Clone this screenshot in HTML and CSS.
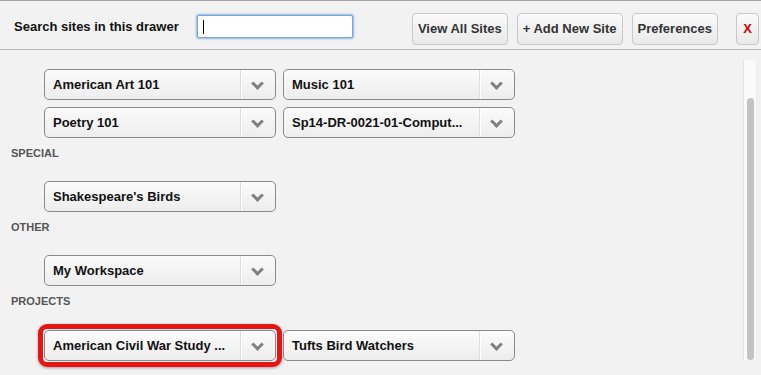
FILE: index.html
```html
<!DOCTYPE html>
<html lang="en">
<head>
    <meta charset="UTF-8">
    <meta name="viewport" content="width=device-width, initial-scale=1.0">
    <title>Sites Drawer</title>
    <link rel="stylesheet" href="styles.css">
</head>
<body>
    <header class="drawer-header">
        <label class="search-label" for="search">Search sites in this drawer</label>
        <input class="search-input" id="search" type="text">
        <div class="actions">
            <button class="btn">View All Sites</button>
            <button class="btn">+ Add New Site</button>
            <button class="btn">Preferences</button>
            <button class="btn btn-close">X</button>
        </div>
    </header>
    <div class="drawer">
        <div class="sites">
            <ul class="site-grid">
                <li class="site"><span class="site-name">American Art 101</span><span class="site-toggle"></span></li>
                <li class="site"><span class="site-name">Music 101</span><span class="site-toggle"></span></li>
                <li class="site"><span class="site-name">Poetry 101</span><span class="site-toggle"></span></li>
                <li class="site"><span class="site-name">Sp14-DR-0021-01-Comput...</span><span class="site-toggle"></span></li>
            </ul>
            <h4 class="group-title">Special</h4>
            <ul class="site-grid">
                <li class="site"><span class="site-name">Shakespeare's Birds</span><span class="site-toggle"></span></li>
            </ul>
            <h4 class="group-title">Other</h4>
            <ul class="site-grid">
                <li class="site"><span class="site-name">My Workspace</span><span class="site-toggle"></span></li>
            </ul>
            <h4 class="group-title">Projects</h4>
            <ul class="site-grid">
                <li class="site highlighted"><span class="site-name">American Civil War Study ...</span><span class="site-toggle"></span></li>
                <li class="site"><span class="site-name">Tufts Bird Watchers</span><span class="site-toggle"></span></li>
            </ul>
        </div>
        <div class="scrollbar"><div class="scroll-thumb"></div></div>
    </div>
</body>
</html>
```

FILE: styles.css
```css
html, body {
    height: 100%;
}
body {
    font-family: "Liberation Sans", Arial, sans-serif;
    background-color: #f2f2f2;
    color: #111;
    margin: 0;
    padding: 0;
    overflow: hidden;
}
.drawer-header {
    display: flex;
    align-items: center;
    height: 48px;
    border-top: 1px solid #a3a3a3;
    border-bottom: 1px solid #b8b8b8;
    padding-left: 14px;
}
.search-label {
    font-size: 13px;
    font-weight: bold;
    margin-top: 2px;
}
.search-input {
    box-sizing: border-box;
    width: 156px;
    height: 23px;
    margin: 3px 0 0 18px;
    border: 1px solid #7da6d6;
    border-radius: 2px;
    box-shadow: 0 0 2px 1px #8db6e6;
    outline: none;
    background: linear-gradient(#000, #000) no-repeat 5px 4px / 1px 14px, #fff;
}
.actions {
    display: flex;
    align-items: center;
    margin-left: auto;
    margin-right: 2px;
    margin-top: 7px;
}
.btn {
    height: 32px;
    padding: 0 5px;
    margin-left: 9px;
    font-family: "Liberation Sans", Arial, sans-serif;
    font-size: 13px;
    font-weight: bold;
    color: #333;
    background: linear-gradient(#fafafa, #e9e9e9);
    border: 1px solid #c9c9c9;
    border-radius: 4px;
}
.btn-close {
    width: 23px;
    padding: 0;
    margin-left: 18px;
    color: #d00000;
}
.drawer {
    display: flex;
}
.sites {
    flex: 1;
    padding: 19px 0 0 11px;
}
.site-grid {
    list-style: none;
    margin: 0 0 0 33px;
    padding: 0;
    display: grid;
    grid-template-columns: 232px 232px;
    gap: 7px;
}
.site {
    position: relative;
    box-sizing: border-box;
    height: 31px;
    display: flex;
    align-items: center;
    border: 1px solid #8a8a8a;
    border-radius: 5px;
    background: linear-gradient(#fbfbfb, #ededed);
}
.site-name {
    flex: 1;
    padding-left: 8px;
    font-size: 13px;
    font-weight: bold;
    white-space: nowrap;
}
.site-toggle {
    position: relative;
    width: 34px;
    height: 100%;
    border-left: 1px solid #dedede;
    box-shadow: inset 1px 0 0 #fff;
}
.site-toggle::after {
    content: "";
    position: absolute;
    left: 12px;
    top: 9px;
    width: 6px;
    height: 6px;
    border-right: 3px solid #808080;
    border-bottom: 3px solid #808080;
    transform: rotate(45deg);
}
.highlighted::before {
    content: "";
    position: absolute;
    inset: -7px;
    border: 5px solid #e81414;
    border-radius: 9px;
    box-shadow: 0 1px 3px rgba(0, 0, 0, 0.35);
}
.group-title {
    margin: 8px 0 21px;
    font-size: 11px;
    line-height: 14px;
    font-weight: bold;
    text-transform: uppercase;
    color: #555;
}
.group-title:last-of-type {
    margin-bottom: 22px;
}
.scrollbar {
    box-sizing: border-box;
    width: 14px;
    height: 300px;
    margin: 10px 4px 0 0;
    background: #fafafa;
    border-left: 1px solid #e4e4e4;
    border-right: 1px solid #ededed;
    padding: 38px 2px 0 3px;
}
.scroll-thumb {
    height: 262px;
    background: #c3c3c3;
    border-radius: 4px;
}
```
